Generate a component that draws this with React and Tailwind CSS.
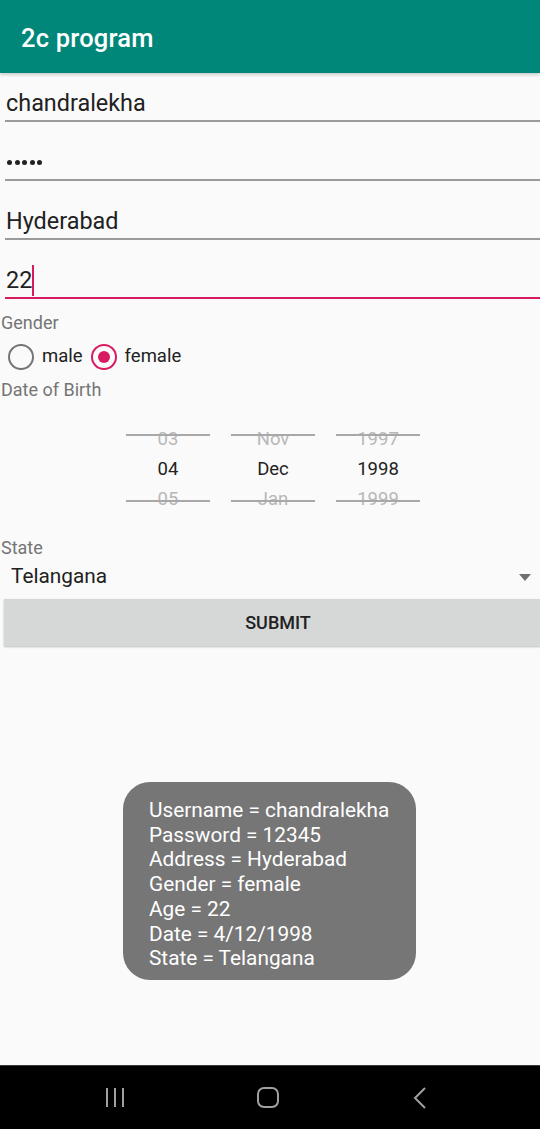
import React from 'react';

const font = { fontFamily: 'Roboto, "Noto Sans", sans-serif' };

function Field({ children, first, active }) {
  return (
    <div className={`${first ? 'pt-[15px]' : 'pt-[25px]'} ml-[5px]`}>
      <div className="h-[30px] mb-[2px] pl-[1px] flex items-center text-[23.4px] text-[#212121] leading-[30px]">
        {children}
      </div>
      <div className={`h-[2px] ${active ? 'bg-[#d81b60]' : 'bg-[#9a9a9a]'}`} />
    </div>
  );
}

function PickerColumn({ prev, value, next }) {
  return (
    <div className="relative w-[84px] flex flex-col items-center text-[18.5px]">
      <div className="h-[30px] leading-[30px] text-[#b8b8b8]">{prev}</div>
      <div className="h-[30px] leading-[30px] text-[#222]">{value}</div>
      <div className="h-[30px] leading-[30px] text-[#b8b8b8]">{next}</div>
      <div className="absolute left-0 right-0 top-[10px] h-[2px] bg-[#a8a8a8]" />
      <div className="absolute left-0 right-0 top-[76px] h-[2px] bg-[#a8a8a8]" />
    </div>
  );
}

export default function App() {
  const toastLines = [
    'Username = chandralekha',
    'Password = 12345',
    'Address = Hyderabad',
    'Gender = female',
    'Age = 22',
    'Date = 4/12/1998',
    'State = Telangana',
  ];

  return (
    <div style={font} className="w-[540px] h-[1129px] flex flex-col bg-[#fafafa] overflow-hidden">
      <div className="h-[1065px] flex flex-col">
        {/* app bar */}
        <div className="h-[73px] shrink-0 bg-[#00877a] flex items-center pl-[21px] pt-[4px] shadow-[0_2px_3px_rgba(0,0,0,0.18)] relative z-10">
          <span className="text-[25.5px] font-medium text-white tracking-[0.2px]">2c program</span>
        </div>

        <Field first>chandralekha</Field>
        <Field>
          <span className="flex gap-[2.6px] pl-[1px]">
            {[0, 1, 2, 3, 4].map(i => (
              <span key={i} className="w-[5px] h-[5px] rounded-full bg-[#222]" />
            ))}
          </span>
        </Field>
        <Field>Hyderabad</Field>
        <Field active>
          <span>22</span>
          <span className="w-[2px] h-[31px] bg-[#d81b60]" />
        </Field>

        <div className="mt-[13px] pl-[1px] h-[22px] leading-[22px] text-[18px] text-[#757575]">Gender</div>
        <div className="mt-[6px] h-[34px] flex items-center pl-[8px] text-[18.5px] text-[#212121]">
          <span className="w-[26px] h-[26px] rounded-full border-2 border-[#757575]" />
          <span className="ml-[8px]">male</span>
          <span className="ml-[8px] w-[26px] h-[26px] rounded-full border-2 border-[#d81b60] flex items-center justify-center">
            <span className="w-[12px] h-[12px] rounded-full bg-[#d81b60]" />
          </span>
          <span className="ml-[8px]">female</span>
        </div>
        <div className="mt-[5px] pl-[1px] h-[22px] leading-[22px] text-[18px] text-[#757575]">Date of Birth</div>

        <div className="mt-[23px] pl-[126px] flex gap-[21px]">
          <PickerColumn prev="03" value="04" next="05" />
          <PickerColumn prev="Nov" value="Dec" next="Jan" />
          <PickerColumn prev="1997" value="1998" next="1999" />
        </div>

        <div className="mt-[23px] pl-[1px] h-[22px] leading-[22px] text-[18px] text-[#757575]">State</div>
        <div className="h-[36px] flex items-center justify-between pl-[11px] pr-[9px]">
          <span className="text-[20.8px] text-[#212121]">Telangana</span>
          <svg width="12" height="7" viewBox="0 0 12 7">
            <path d="M0 0 L12 0 L6 7 Z" fill="#6f6f6f" />
          </svg>
        </div>
        <div className="mt-[4px] ml-[4px] h-[47px] bg-[#d6d7d7] flex items-center justify-center shadow-[0_1px_2px_rgba(0,0,0,0.25)]">
          <span className="text-[18px] font-medium text-[#212121] pl-[12px]">SUBMIT</span>
        </div>

        {/* toast */}
        <div className="mt-[136px] ml-[123px] w-[293px] h-[198px] rounded-[27px] bg-[#767676] pt-[16px] pl-[26px]">
          {toastLines.map((l, i) => (
            <div key={i} className="text-[20.8px] leading-[24.7px] text-white">{l}</div>
          ))}
        </div>
      </div>

      {/* nav bar */}
      <div className="h-[64px] shrink-0 bg-black border-t border-[#3a3a3a] flex items-center">
        <div className="w-[116px]" />
        <div className="flex gap-[6px] -ml-[10px]">
          <span className="w-[2px] h-[19px] bg-[#a0a0a0]" />
          <span className="w-[2px] h-[19px] bg-[#a0a0a0]" />
          <span className="w-[2px] h-[19px] bg-[#a0a0a0]" />
        </div>
        <span className="ml-[133px] w-[22px] h-[21px] rounded-[7px] border-2 border-[#a0a0a0]" />
        <svg className="ml-[134px]" width="14" height="22" viewBox="0 0 14 22">
          <path d="M12 1 L2 11 L12 21" stroke="#a0a0a0" strokeWidth="2" fill="none" />
        </svg>
      </div>
    </div>
  );
}
